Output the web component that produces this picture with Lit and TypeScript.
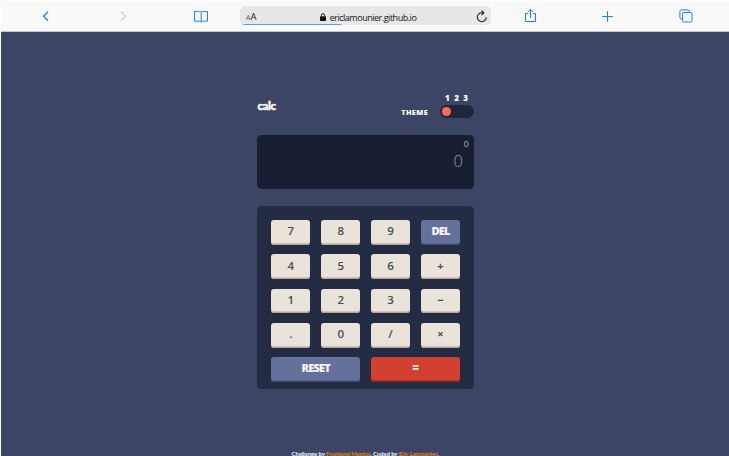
import { LitElement, html, css, svg } from "lit";
import { customElement } from "lit/decorators.js";
import { classMap } from "lit/directives/class-map.js";

const icon = (body: unknown, cls = "") =>
  html`<svg class="icon ${cls}" width="18" height="18" viewBox="0 0 18 18" aria-hidden="true">${body}</svg>`;

const icons = {
  back: svg`<path d="M12 4.700 7.600 9.200l4.400 4.500" stroke-width="1.300"/>`,
  forward: svg`<path d="M7 4.700l4.400 4.500L7 13.700" stroke-width="1.100"/>`,
  book: svg`<path d="M9.200 14.900V5.200C8.400 4.200 7 4.500 5.600 4.500H2.500v9.700h3.500c1.400 0 2.400 0 3.200.9.800-.9 1.800-.9 3.200-.9h3.100V4.500h-2.700c-1.400 0-2.800-.3-3.600.7"/>`,
  share: svg`<path d="M7 6.500H4.500v8h10v-8H12M9.500 11V2.500M6.900 4.900l2.600-2.600 2.600 2.600"/>`,
  plus: svg`<path d="M8.500 4.200v10.600M3.200 9.500h10.600" stroke-width="1.100"/>`,
  tabs: svg`<rect x="5.500" y="5.500" width="9.500" height="9.500" rx="1.600"/><path d="M5.500 12H4.400a1.500 1.500 0 0 1-1.500-1.500V4.400a1.500 1.500 0 0 1 1.500-1.500h6.400a1.500 1.500 0 0 1 1.500 1.500v1.100"/>`,
};

@customElement("browser-bar")
export class BrowserBar extends LitElement {
  static styles = css`
    :host {
      display: grid;
      grid-template-columns: repeat(3, 78px) 251px repeat(3, 78px);
      box-sizing: border-box;
      height: 31px;
      padding-left: 5px;
      background: #f9f9f9;
      border-bottom: 1px solid #c3c4c6;
      font-family: "Open Sans", "Noto Sans", sans-serif;
    }
    .cell { display: flex; justify-content: center; padding-top: 6px; }
    .icon { fill: none; stroke: #1682f7; stroke-width: 1; }
    .muted { stroke: #c9c9cb; }
    .field {
      position: relative;
      display: grid;
      grid-template-columns: 58px 1fr 58px;
      align-items: center;
      height: 19px;
      margin-top: 5px;
      border-radius: 5px;
      background: #e7e7e7;
      overflow: hidden;
      color: #151515;
    }
    .size { padding-left: 6px; font-size: 9.5px; line-height: 21px; }
    .size small { font-size: 7px; color: #555; }
    .address { display: flex; align-items: center; justify-content: center; gap: 4px; padding-left: 5px; font-size: 9px; letter-spacing: -0.48px; line-height: 19px; white-space: nowrap; }
    .reload { justify-self: end; margin-right: 2px; fill: none; stroke: #222; stroke-width: 1.1; }
    .progress { position: absolute; left: 2px; bottom: 0; width: 99px; height: 1px; background: #4ba0fb; }
  `;

  render() {
    return html`
      <div class="cell">${icon(icons.back)}</div>
      <div class="cell">${icon(icons.forward, "muted")}</div>
      <div class="cell">${icon(icons.book)}</div>
      <div class="field">
        <span class="size"><small>A</small>A</span>
        <span class="address">
          <svg width="6" height="8" viewBox="0 0 6 8"><rect y="3.200" width="6" height="4.800" rx=".7" fill="#111"/><path d="M1.400 3.500V2.200a1.600 1.600 0 0 1 3.200 0v1.300" fill="none" stroke="#111" stroke-width=".9"/></svg>
          ericlamounier.github.io
        </span>
        <svg class="reload" width="14" height="14" viewBox="0 0 14 14"><path d="M11.300 7.200A4.500 4.500 0 1 1 6.800 2.700h1.700M6.500.5l2.300 2.200-2.300 2.300"/></svg>
        <span class="progress"></span>
      </div>
      <div class="cell">${icon(icons.share)}</div>
      <div class="cell">${icon(icons.plus)}</div>
      <div class="cell">${icon(icons.tabs)}</div>
    `;
  }
}

const OPERATORS = ["+", "−", "×"];
const KEYS = ["7", "8", "9", "DEL", "4", "5", "6", "+", "1", "2", "3", "−", ".", "0", "/", "×", "RESET", "="];

@customElement("calc-app")
export class CalcApp extends LitElement {
  static styles = css`
    :host { display: block; width: 216.600px; margin-left: 256.400px; font-family: "Open Sans", sans-serif; color: #fff; }
    .head { display: flex; justify-content: space-between; height: 42px; }
    .title { font: 900 11.500px/14px Lato, sans-serif; letter-spacing: -0.450px; padding-top: 6px; -webkit-text-stroke: 0.400px #fff; }
    .theme { display: flex; align-items: flex-end; gap: 12px; height: 25px; }
    .label { font-size: 7.300px; font-weight: 800; letter-spacing: 0.350px; line-height: 12px; }
    .numbers { display: flex; justify-content: space-between; padding: 0 6px 0 5px; font-size: 8px; font-weight: 800; line-height: 10px; }
    .toggle { box-sizing: border-box; width: 34px; height: 13px; margin-top: 2px; padding: 2px; border-radius: 7px; background: #1f273a; }
    .knob { width: 9px; height: 9px; margin-left: 0.500px; border-radius: 50%; background: #ff6b56; }
    .display { box-sizing: border-box; height: 54px; padding-top: 4px; border-radius: 4.500px; background: #191f32; text-align: right; }
    .previous { padding-right: 5px; font-size: 9.500px; line-height: 10px; color: #8c8f98; font-weight: 600; }
    .current { padding-right: 11px; font-weight: 300; font-size: 16.500px; line-height: 24px; color: #9b9a97; }
    .keys {
      display: grid;
      grid-template-columns: repeat(4, 38.900px);
      grid-auto-rows: 24.700px;
      gap: 9.600px 11px;
      box-sizing: border-box;
      height: 182.500px;
      margin-top: 17px;
      padding: 14px;
      border-radius: 4.500px;
      background: #242c43;
    }
    .key {
      display: block;
      padding: 0 0 2px;
      border: 0;
      border-radius: 3px;
      background: #eae3da;
      box-shadow: inset 0 -1.500px #b4a597;
      color: #454b59;
      font: 600 11.500px/22px "Open Sans", sans-serif;
      text-align: center;
    }
    .operator { font-size: 11px; font-weight: 700; }
    .blue { background: #65719b; box-shadow: inset 0 -1.500px #414e78; color: #f5f6fb; letter-spacing: -0.800px; font-size: 11px; font-weight: 800; }
    .wide { grid-column: span 2; }
    .red { background: #d03f30; box-shadow: inset 0 -1.500px #942619; color: #f5e9e7; font-weight: 800; }
  `;

  render() {
    return html`
      <div class="head">
        <div class="title">calc</div>
        <div class="theme">
          <div class="label">THEME</div>
          <div>
            <div class="numbers"><span>1</span><span>2</span><span>3</span></div>
            <div class="toggle"><div class="knob"></div></div>
          </div>
        </div>
      </div>
      <div class="display">
        <div class="previous">0</div>
        <div class="current">0</div>
      </div>
      <div class="keys">
        ${KEYS.map((k) => html`<button class=${classMap({
          key: true,
          operator: OPERATORS.includes(k),
          blue: k === "DEL" || k === "RESET",
          wide: k === "RESET" || k === "=",
          red: k === "=",
        })}>${k}</button>`)}
      </div>
    `;
  }
}

@customElement("app-root")
export class AppRoot extends LitElement {
  static styles = css`
    :host { display: block; box-sizing: border-box; height: 456px; padding: 1px 0 0 1px; background: #fff; overflow: hidden; }
    .page { box-sizing: border-box; height: 424px; padding-top: 61px; background: #3c4664; overflow: hidden; }
    .credit { margin-top: 60px; text-align: center; font: 900 6px/10px Lato, sans-serif; letter-spacing: -0.100px; color: #e6e8ef; }
    .credit a { color: #e07b12; text-decoration: underline; }
  `;

  render() {
    return html`
      <browser-bar></browser-bar>
      <main class="page">
        <calc-app></calc-app>
        <div class="credit">Challenge by <a>Frontend Mentor</a>. Coded by <a>Eric Lamounier</a>.</div>
      </main>
    `;
  }
}
